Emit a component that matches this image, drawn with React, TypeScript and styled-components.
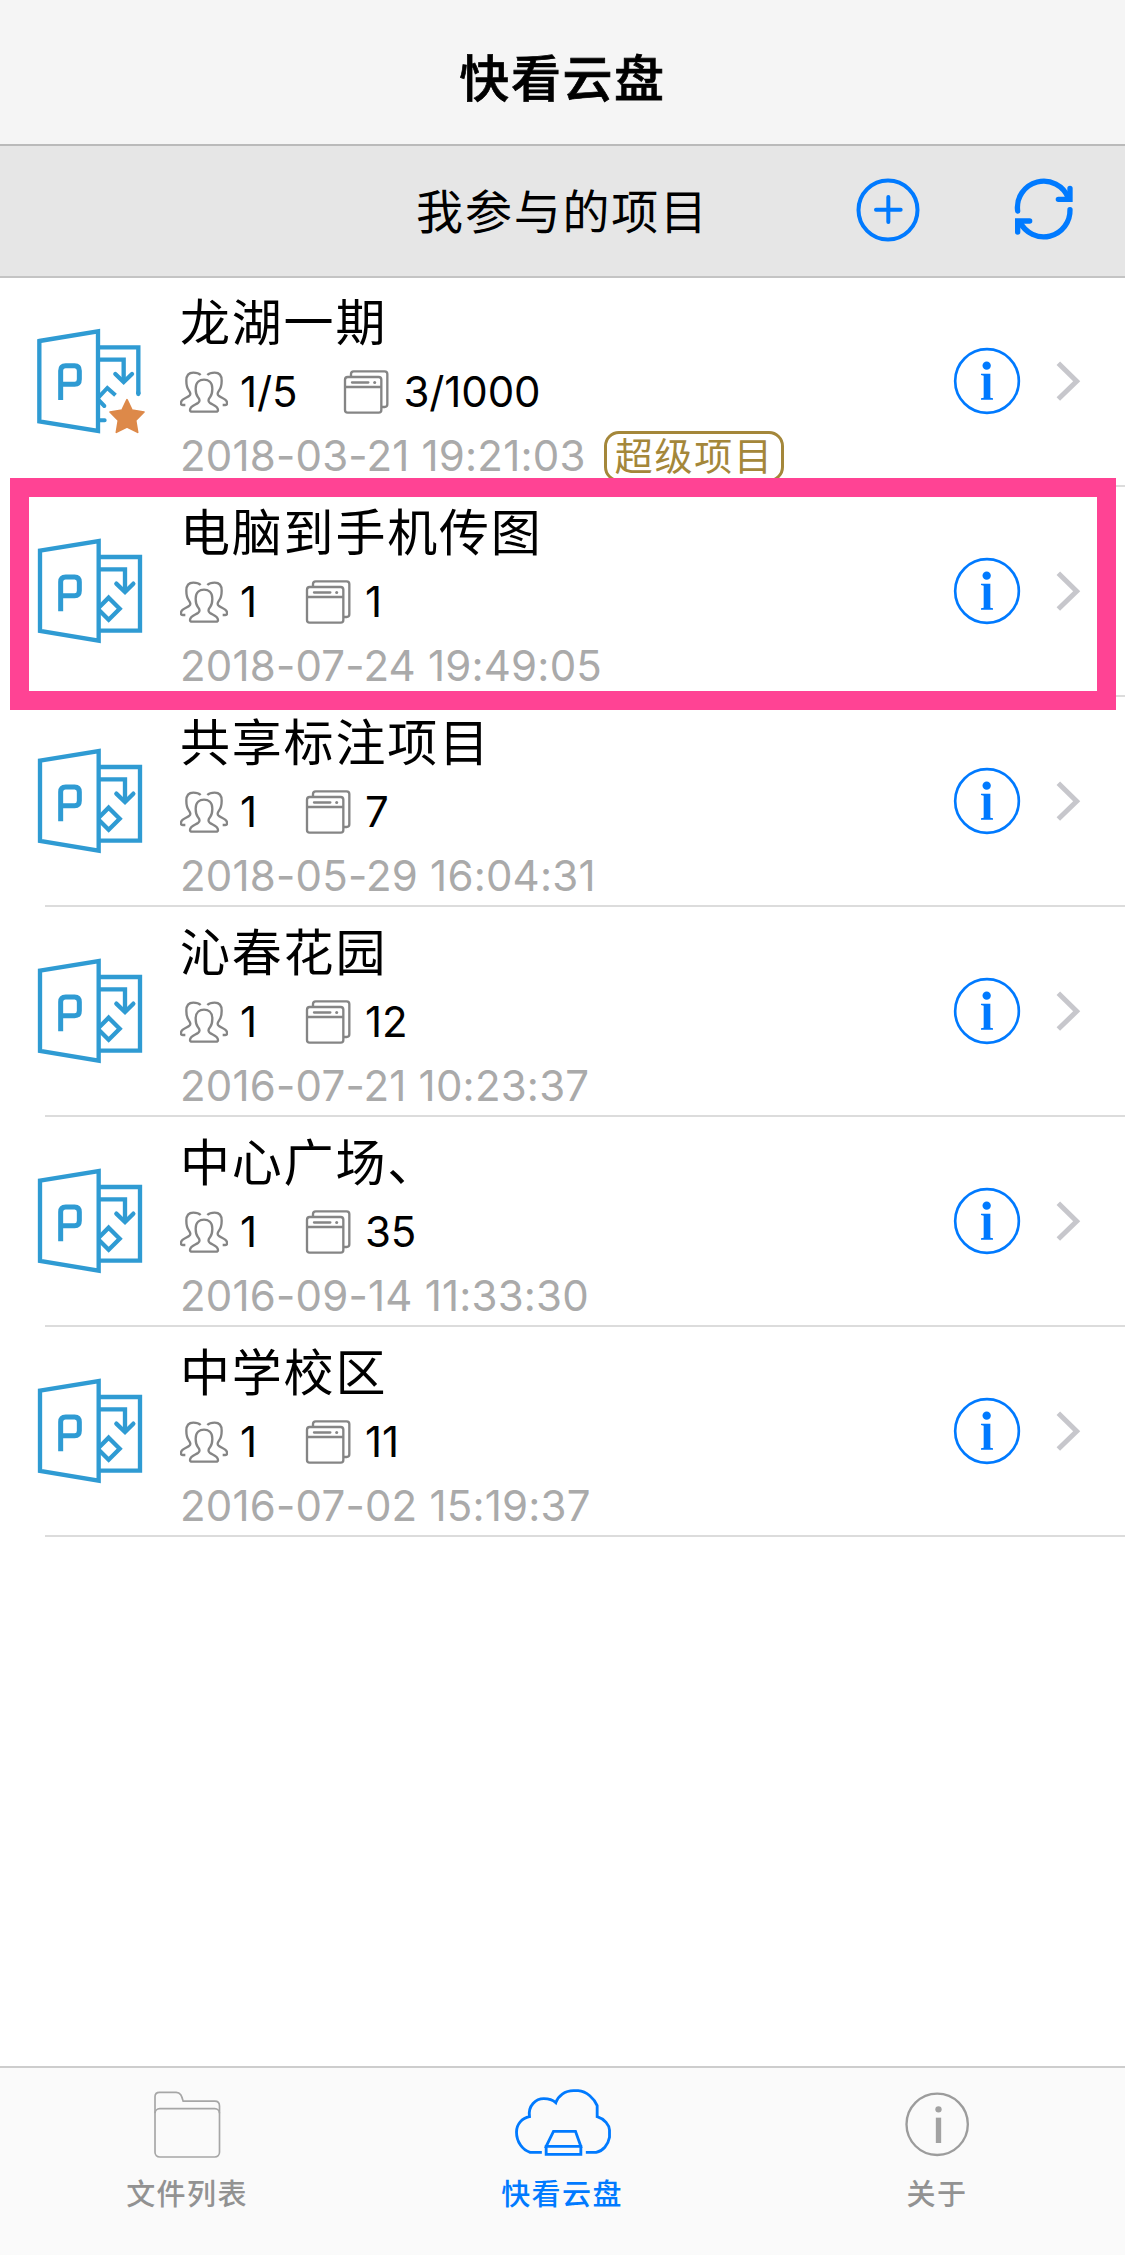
import React from "react";
import styled, { createGlobalStyle } from "styled-components";

const CJK = `"Noto Sans CJK SC", "Noto Sans", sans-serif`;
const LATIN = `Inter, "Noto Sans CJK SC", sans-serif`;
const BLUE = "#007aff";

const GlobalStyle = createGlobalStyle`
  *, *::before, *::after { box-sizing: border-box; }
  body { margin: 0; background: #fff; }
  svg { display: block; flex: none; }
`;

const Screen = styled.div`
  display: flex;
  flex-direction: column;
  width: 1125px;
  height: 2255px;
  overflow: hidden;
  background: #fff;
  color: #000;
  font-family: ${CJK};
`;

const NavBar = styled.header`
  flex: none;
  display: flex;
  justify-content: center;
  height: 146px;
  padding-top: 45px;
  background: #f5f5f5;
  border-bottom: 2px solid #bababa;
`;

const NavTitle = styled.h1`
  margin: 0;
  font-size: 50px;
  font-weight: 500;
  line-height: 60px;
  letter-spacing: 1.6px;
  -webkit-text-stroke: 0.7px #000;
`;

const SubHeader = styled.div`
  flex: none;
  display: grid;
  grid-template-columns: 1fr auto 1fr;
  align-items: center;
  height: 132px;
  padding-bottom: 3px;
  background: #e6e6e6;
  border-bottom: 2px solid #c4c4c4;
`;

const SubTitle = styled.h2`
  grid-column: 2;
  margin: 0 0 1px;
  font-size: 47px;
  font-weight: 400;
  line-height: 60px;
  letter-spacing: 1.8px;
`;

const Actions = styled.div`
  display: flex;
  justify-content: flex-end;
  gap: 90px;
  padding-right: 48px;
`;

const IconButton = styled.button`
  padding: 0;
  border: 0;
  background: none;
`;

const List = styled.main`
  flex: 1;
  margin-top: -1px;
`;

const Row = styled.article`
  position: relative;
  height: 210px;
`;

const RowMain = styled.div`
  display: flex;
  align-items: center;
  height: 208px;
  padding: 0 43px 0 35px;
`;

const Separator = styled.div`
  height: 2px;
  margin-left: 45px;
  background: #dcdcdc;
`;

const Highlight = styled.div`
  position: absolute;
  z-index: 1;
  inset: -9px 9px auto 10px;
  height: 232px;
  border: 19px solid #ff4394;
  pointer-events: none;
`;

const Body = styled.div`
  flex: 1;
  align-self: stretch;
  display: flex;
  flex-direction: column;
  padding-top: 12px;
  margin-left: 31px;
`;

const Title = styled.h3`
  margin: 0 0 13px;
  font-size: 50px;
  font-weight: 400;
  line-height: 60px;
  letter-spacing: 1.8px;
`;

const Stats = styled.div`
  display: flex;
  align-items: center;
  height: 60px;
  font: 400 42px/60px ${LATIN};
`;

const Count = styled.span<{ $first?: boolean }>`
  margin-left: ${(p) => (p.$first ? 12 : 14)}px;
  width: ${(p) => (p.$first && !p.children?.toString().includes("/") ? "19px" : "auto")};
  margin-right: ${(p) => (p.$first ? 46 : 0)}px;
  letter-spacing: -0.1px;
`;

const Meta = styled.div`
  display: flex;
  align-items: center;
  height: 56px;
  margin-top: 6px;
`;

const DateText = styled.time`
  color: #aaa;
  font: 400 42px/56px ${LATIN};
  letter-spacing: 0.2px;
  white-space: pre;
`;

const Badge = styled.span`
  display: flex;
  align-items: center;
  height: 51px;
  margin-left: 18px;
  padding: 0 7px 4px 8px;
  border: 3px solid #a4873a;
  border-radius: 15px;
  color: #a4873a;
  font-size: 38px;
  line-height: 40px;
  letter-spacing: 1.8px;
`;

const Accessories = styled.div`
  display: flex;
  align-items: center;
  gap: 34px;
`;

const TabBar = styled.nav`
  flex: none;
  display: grid;
  grid-template-columns: repeat(3, 1fr);
  height: 189px;
  padding-top: 19px;
  background: #fafafa;
  border-top: 2px solid #cdcdcd;
`;

const Tab = styled.a<{ $active?: boolean }>`
  display: flex;
  flex-direction: column;
  align-items: center;
  gap: 15px;
  color: ${(p) => (p.$active ? BLUE : "#929292")};
`;

const TabLabel = styled.span`
  padding-right: 1px;
  font-size: 29px;
  font-weight: 500;
  line-height: 40px;
  letter-spacing: 1.4px;
`;

const ProjectIcon = ({ starred }: { starred?: boolean }) => (
  <svg width="114" height="108" viewBox="105 201 342 324" fill="none" stroke="#2f9bd3" strokeWidth="13">
    {starred ? (
      <>
        <path d="M296 262H415V402" />
        <path d="M415 398V402" strokeLinecap="round" />
        <path d="M296 299H371V362" />
        <path d="M346 342L371 366L396 342" strokeLinecap="round" />
        <path d="M292 416L322 384L342 402" strokeLinecap="square" strokeWidth="12" />
        <path d="M292 416L313 438M296 481H314" strokeLinecap="round" strokeWidth="12" />
        <path
          d="M381 419L396 450L432 456L407 481L413 517L381 501L349 517L355 481L330 456L366 450Z"
          fill="#dd8949"
          stroke="#dd8949"
          strokeWidth="5"
          strokeLinejoin="round"
        />
      </>
    ) : (
      <>
        <path d="M296 261H420V482H296" />
        <path d="M296 298H375V362" />
        <path d="M349 341L375 366L400 341" strokeLinecap="round" />
        <path d="M326 383L359 416L326 449L293 416Z" />
      </>
    )}
    <g transform={starred ? "translate(-2 1)" : undefined}>
      <path d="M120 242L296 213V512L120 483Z" fill="#fff" />
      <path
        d="M182 424V336Q182 321 197 321H224Q238 321 238 336V362Q238 377 224 377H182"
        strokeWidth="15"
        transform={starred ? "translate(2 -5)" : undefined}
      />
    </g>
  </svg>
);

const PeopleIcon = () => {
  const side =
    "M92 45C86 39 78 38 70 38C56 38 49 48 49 62C49 75 51 84 57 92C62 99 63 104 57 108C50 114 33 117 33 128V131Q33 135 38 135H46";
  return (
    <svg width="48" height="44" viewBox="30 30 144 132" fill="none" stroke="#858585" strokeWidth="7">
      <path d={side} />
      <path d={side} transform="translate(204 0) scale(-1 1)" />
      <path d="M60 150C60 138 75 135 84 129C91 124 89 118 84 112C78 104 77 95 77 86C77 66 90 59 102 59C114 59 127 66 127 86C127 95 126 104 120 112C115 118 113 124 120 129C129 135 144 138 144 150Q144 155 138 155H66Q60 155 60 150Z" />
    </svg>
  );
};

const CardsIcon = () => (
  <svg width="46" height="44" viewBox="408 31 138 132" fill="none" stroke="#858585" strokeWidth="7">
    <path d="M432 50V43Q432 35 440 35H533Q541 35 541 43V134Q541 142 533 142H525" />
    <rect x="414" y="52" width="109" height="107" rx="8" />
    <path d="M414 82H523" />
    <path d="M435 68.500H484" strokeLinecap="round" strokeWidth="7" />
    <circle cx="503" cy="68.500" r="4.500" fill="#858585" stroke="none" />
  </svg>
);

const InfoIcon = () => (
  <svg width="68" height="68" viewBox="159 142 204 204">
    <circle cx="261" cy="244" r="95.500" fill="none" stroke={BLUE} strokeWidth="8" />
    <circle cx="260" cy="198" r="12.500" fill={BLUE} />
    <path d="M243 222H271V294L279 296V300H243V296L251 294V228L243 226Z" fill={BLUE} />
  </svg>
);

const Chevron = () => (
  <svg width="27" height="43" viewBox="465 180 81 129" fill="none" stroke="#c7c7cc" strokeWidth="15">
    <path d="M475 190L530 244L475 297" />
  </svg>
);

const AddIcon = () => (
  <svg width="66" height="66" viewBox="46 49 198 198" fill="none" stroke={BLUE} strokeLinecap="round">
    <circle cx="145" cy="148" r="88.500" strokeWidth="12" />
    <path d="M109 147H183M146 109V184" strokeWidth="12" />
  </svg>
);

const RefreshIcon = () => (
  <svg width="66" height="66" viewBox="513 49 198 198" fill="none" stroke={BLUE} strokeWidth="16" strokeLinecap="round">
    <path d="M533 151A79 79 0 0 1 685 112" />
    <path d="M690 83V116H655" />
    <path d="M690 147A79 79 0 0 1 540 184" />
    <path d="M533 214V181H569" />
  </svg>
);

const FolderIcon = () => (
  <svg width="100" height="70" viewBox="413.5 111 300 210" overflow="visible" fill="none" stroke="#a6a6a6" strokeWidth="5">
    <path d="M464.500 190V140Q464.500 127 478 127H528C542 127 545 140 549 153.500H644Q658 153.500 658 168V190" />
    <rect x="464.500" y="176" width="193.500" height="145" rx="14" />
  </svg>
);

const CloudIcon = () => (
  <svg width="100" height="70" viewBox="158.5 111 300 210" fill="none" stroke={BLUE} strokeWidth="8.500">
    <path d="M245 307H210C187 300 169 276 169 246C169 222 186 204 208 200C203 167 227 146 251 146C266 146 278 150 287 158C294 137 314 122 340 122H354C380 124 402 146 411 167V200C434 207 447 226 448 240V262C444 285 428 303 408 307H377" />
    <path d="M280 244H346L362 289H258ZM258 289H362V313H258Z" />
  </svg>
);

const AboutIcon = () => (
  <svg width="100" height="70" viewBox="113.5 111 300 210" fill="none">
    <circle cx="261" cy="223" r="92" stroke="#9c9c9c" strokeWidth="7" />
    <circle cx="265" cy="178" r="9.500" fill="#a2a2a2" />
    <path d="M257 203H273V279H257Z" fill="#a2a2a2" />
  </svg>
);

type Project = {
  name: string;
  members: string;
  files: string;
  date: string;
  badge?: string;
  highlighted?: boolean;
};

const projects: Project[] = [
  { name: "龙湖一期", members: "1/5", files: "3/1000", date: "2018-03-21 19:21:03", badge: "超级项目" },
  { name: "电脑到手机传图", members: "1", files: "1", date: "2018-07-24 19:49:05", highlighted: true },
  { name: "共享标注项目", members: "1", files: "7", date: "2018-05-29 16:04:31" },
  { name: "沁春花园", members: "1", files: "12", date: "2016-07-21 10:23:37" },
  { name: "中心广场、", members: "1", files: "35", date: "2016-09-14 11:33:30" },
  { name: "中学校区", members: "1", files: "11", date: "2016-07-02 15:19:37" },
];

const ProjectRow = ({ project }: { project: Project }) => (
  <Row>
    <RowMain>
      <ProjectIcon starred={!!project.badge} />
      <Body>
        <Title>{project.name}</Title>
        <Stats>
          <PeopleIcon />
          <Count $first>{project.members}</Count>
          <CardsIcon />
          <Count>{project.files}</Count>
        </Stats>
        <Meta>
          <DateText>{project.date}</DateText>
          {project.badge && <Badge>{project.badge}</Badge>}
        </Meta>
      </Body>
      <Accessories>
        <IconButton aria-label="info"><InfoIcon /></IconButton>
        <Chevron />
      </Accessories>
    </RowMain>
    <Separator />
    {project.highlighted && <Highlight />}
  </Row>
);

export default function App() {
  return (
    <>
      <GlobalStyle />
      <Screen lang="zh-CN">
        <NavBar>
          <NavTitle>快看云盘</NavTitle>
        </NavBar>
        <SubHeader>
          <SubTitle>我参与的项目</SubTitle>
          <Actions>
            <IconButton aria-label="add"><AddIcon /></IconButton>
            <IconButton aria-label="refresh"><RefreshIcon /></IconButton>
          </Actions>
        </SubHeader>
        <List>
          {projects.map((p) => (
            <ProjectRow key={p.name} project={p} />
          ))}
        </List>
        <TabBar>
          <Tab><FolderIcon /><TabLabel>文件列表</TabLabel></Tab>
          <Tab $active><CloudIcon /><TabLabel>快看云盘</TabLabel></Tab>
          <Tab><AboutIcon /><TabLabel>关于</TabLabel></Tab>
        </TabBar>
      </Screen>
    </>
  );
}
